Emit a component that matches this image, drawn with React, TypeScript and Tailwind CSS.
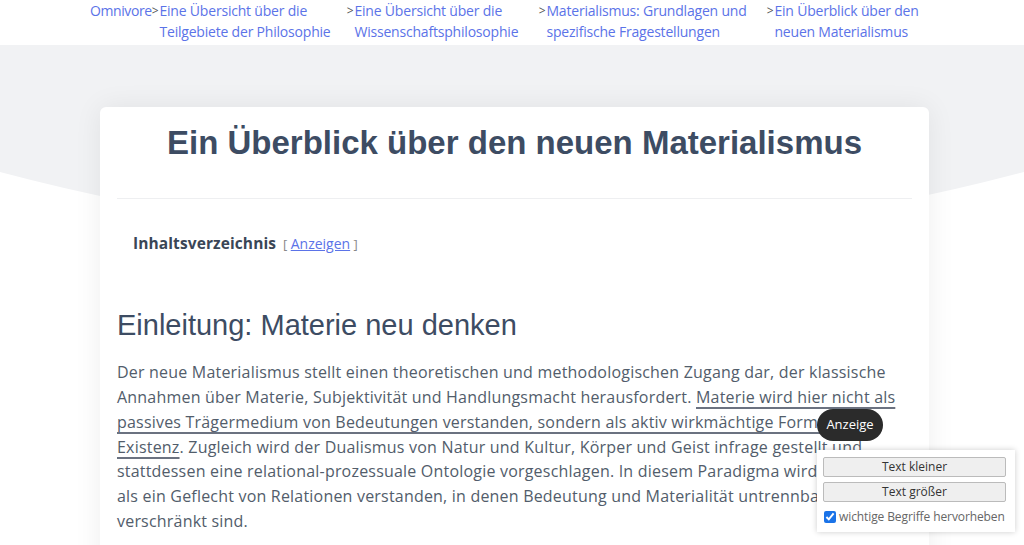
import React from "react";

const body = "font-['Open_Sans',sans-serif]";
const arial = "font-['Liberation_Sans',Arial,sans-serif]";

function Crumb({ lines, w }: { lines: string[]; w: string }) {
  return (
    <div className={`flex ${w}`}>
      <span className="text-[#555] text-[12px] leading-[21px] mr-[1px]">&gt;</span>
      <a className="text-[#5b73e8]">
        {lines[0]}
        <br />
        {lines[1]}
      </a>
    </div>
  );
}

export default function App() {
  const u = "underline decoration-[#6b7280] decoration-[1.5px] underline-offset-[4px]";
  return (
    <div className={`relative h-[545px] overflow-hidden bg-white ${body}`}>
      {/* gray curved backdrop */}
      <svg className="absolute left-0 top-[45px]" width="1024" height="300" viewBox="0 0 1024 300" preserveAspectRatio="none">
        <path d="M0 0 H1024 V127 Q512 263 0 127 Z" fill="#f1f2f4" />
      </svg>

      <nav className="relative z-10 h-[45px] bg-white flex pl-[90px] text-[14px] leading-[21px] tracking-[-0.2px]">
        <a className="text-[#5b73e8] tracking-[-0.4px]">Omnivore</a>
        <Crumb w="w-[195px]" lines={["Eine Übersicht über die", "Teilgebiete der Philosophie"]} />
        <Crumb w="w-[192px]" lines={["Eine Übersicht über die", "Wissenschaftsphilosophie"]} />
        <Crumb w="w-[228px]" lines={["Materialismus: Grundlagen und", "spezifische Fragestellungen"]} />
        <Crumb w="w-[200px]" lines={["Ein Überblick über den", "neuen Materialismus"]} />
      </nav>

      <main className="relative pl-[100px] pt-[62px]">
        <article className="w-[829px] bg-white rounded-[6px] shadow-[0_0_28px_rgba(0,0,0,0.07)] px-[17px] pt-[16px] pb-[40px]">
          <h1 className={`${arial} text-center font-bold text-[33px] leading-[40px] text-[#3d4c63]`}>
            Ein Überblick über den neuen Materialismus
          </h1>
          <div className="mt-[35px] border-t border-[#eeeff1]" />

          <div className="mt-[33px] pl-[16px] flex items-baseline gap-[7px]">
            <span className="text-[15.5px] font-bold text-[#3a4656] tracking-[0.1px]">Inhaltsverzeichnis</span>
            <span className="text-[13px] text-[#888]">
              [ <a className="text-[#5b73e8] underline text-[14px]">Anzeigen</a> ]
            </span>
          </div>

          <h2 className={`${arial} mt-[53px] text-[29px] leading-[34px] text-[#3d4c63]`}>
            Einleitung: Materie neu denken
          </h2>

          <p className="mt-[18px] text-[16px] leading-[24.8px] text-[#525d6b] tracking-[0.2px]">
            Der neue Materialismus stellt einen theoretischen und methodologischen Zugang dar, der klassische
            <br />
            Annahmen über Materie, Subjektivität und Handlungsmacht herausfordert.{" "}
            <span className={u}>
              Materie wird hier nicht als
              <br />
              passives Trägermedium von Bedeutungen verstanden, sondern als aktiv wirkmächtige Form der
              <br />
              Existenz
            </span>
            . Zugleich wird der Dualismus von Natur und Kultur, Körper und Geist infrage gestellt und
            <br />
            stattdessen eine relational-prozessuale Ontologie vorgeschlagen. In diesem Paradigma wird Materie
            <br />
            als ein Geflecht von Relationen verstanden, in denen Bedeutung und Materialität untrennbar
            <br />
            verschränkt sind.
          </p>
        </article>
      </main>

      {/* overlays */}
      <div className="absolute left-[817px] top-[409px] h-[32px] w-[66px] rounded-full bg-[#2b2b2b] text-white text-[13px] flex items-center justify-center">
        Anzeige
      </div>
      <div className="absolute left-[817px] top-[450px] w-[198px] bg-white shadow-[0_0_6px_rgba(0,0,0,0.2)] pl-[6px] pr-[9px] pt-[7px] pb-[6px] flex flex-col gap-[5px]">
        <button className="h-[20px] bg-[#efefef] border border-[#bbb] rounded-[2px] text-[12px] text-[#333]">Text kleiner</button>
        <button className="h-[20px] bg-[#efefef] border border-[#bbb] rounded-[2px] text-[12px] text-[#333]">Text größer</button>
        <label className="flex items-center gap-[3px] whitespace-nowrap text-[12px] text-[#666] mt-[1px] tracking-[-0.1px]">
          <input type="checkbox" defaultChecked className="m-0 ml-[1px] w-[12px] h-[12px] accent-[#1a73e8]" />
          wichtige Begriffe hervorheben
        </label>
      </div>
    </div>
  );
}
